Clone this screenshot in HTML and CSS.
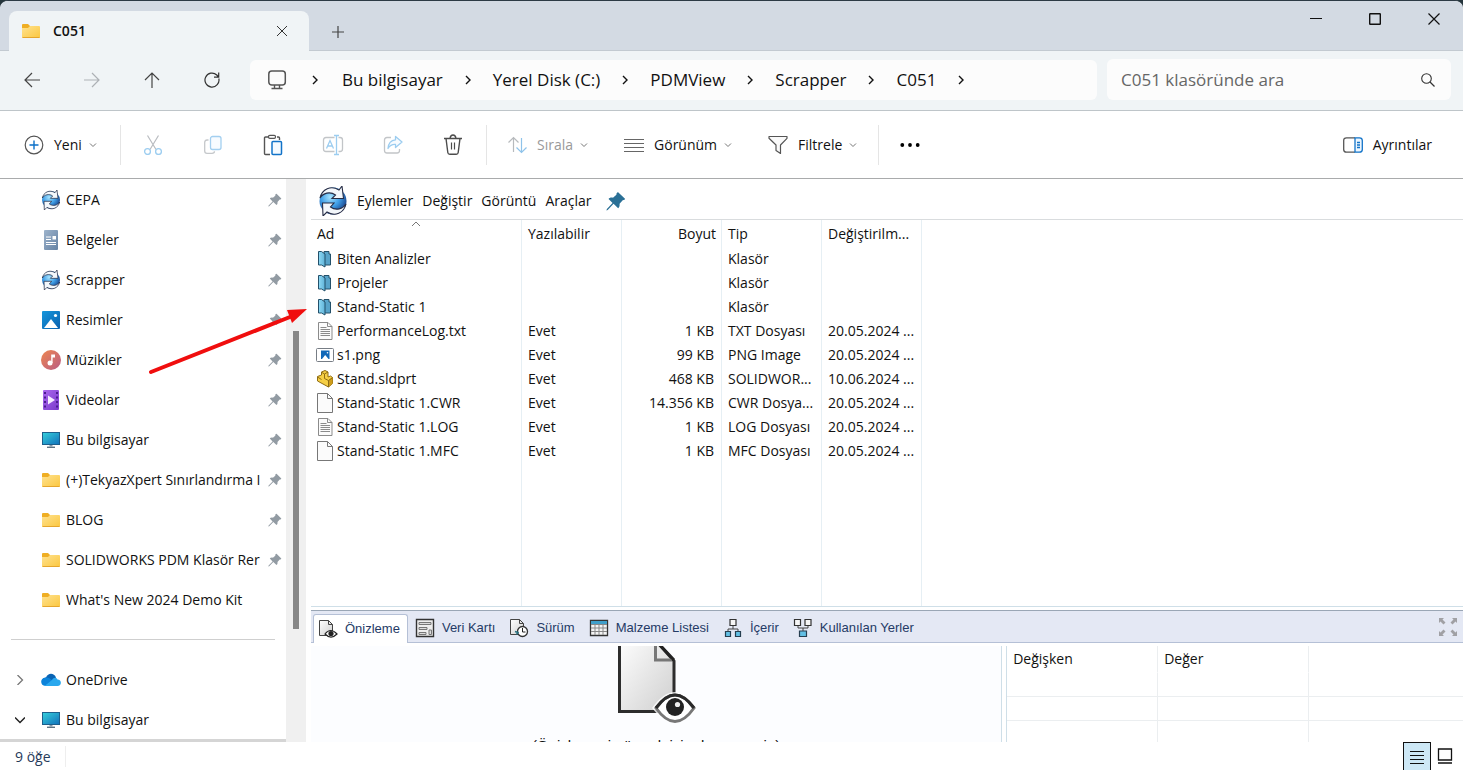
FILE: index.html
```html
<!DOCTYPE html>
<html lang="tr">
<head>
<meta charset="utf-8">
<title>C051</title>
<link rel="stylesheet" href="styles.css">
</head>
<body>
<svg class="sprite" aria-hidden="true">
  <defs>
    <linearGradient id="gFolder" x1="0" y1="0" x2="1" y2="1"><stop offset="0" stop-color="#ffe28f"/><stop offset="1" stop-color="#fbc740"/></linearGradient>
    <linearGradient id="gDoc" x1="0" y1="0" x2="1" y2="1"><stop offset="0" stop-color="#9db3cb"/><stop offset="1" stop-color="#6683a5"/></linearGradient>
    <linearGradient id="gPic" x1="0" y1="0" x2="1" y2="1"><stop offset="0" stop-color="#1596dc"/><stop offset="1" stop-color="#0a60ae"/></linearGradient>
    <linearGradient id="gMusic" x1="0" y1="0" x2="1" y2="1"><stop offset="0" stop-color="#ee8750"/><stop offset="1" stop-color="#b95b84"/></linearGradient>
    <linearGradient id="gVideo" x1="0" y1="0" x2="1" y2="1"><stop offset="0" stop-color="#aa68ee"/><stop offset="1" stop-color="#7a3acb"/></linearGradient>
    <linearGradient id="gScreen" x1="0" y1="0" x2="1" y2="1"><stop offset="0" stop-color="#35d1dc"/><stop offset="1" stop-color="#1270bb"/></linearGradient>
    <linearGradient id="gPaper" x1="0" y1="0" x2="1" y2="1"><stop offset="0" stop-color="#ffffff"/><stop offset="1" stop-color="#cfcfcf"/></linearGradient>
    <linearGradient id="gBlue" x1="0" y1="0" x2="1" y2="0"><stop offset="0" stop-color="#8fdaf5"/><stop offset="1" stop-color="#5fb2d8"/></linearGradient>
    <radialGradient id="gGlobe" cx=".4" cy=".35" r=".7"><stop offset="0" stop-color="#a8e4ff"/><stop offset=".5" stop-color="#3f9ee6"/><stop offset="1" stop-color="#14367e"/></radialGradient>
    <symbol id="folder" viewBox="0 0 20 16"><path d="M1 2a1 1 0 0 1 1-1h5l2 2h9v5H1z" fill="#efae24"/><path d="M1 5h6l2-2h9q1 0 1 1v10q0 1-1 1H2q-1 0-1-1z" fill="url(#gFolder)"/><path d="M1.500 14.500h17" stroke="#e5a52c"/></symbol>
    <symbol id="pdm" viewBox="0 0 30 30"><circle cx="15" cy="15" r="13.500" fill="url(#gGlobe)"/><path d="M2 12C4 3 13-1 21 4l3-4 1.500 12.500H14L17.500 9C12 5 5 7 2 12z" fill="#f3f7fb" stroke="#272d46" stroke-width="1.100"/><path d="M28 18c-2 9-11 13-19 8l-4 4-.5-13H16L12.500 21c5.500 4 12.500 2 15.500-3z" fill="#f3f7fb" stroke="#272d46" stroke-width="1.100"/></symbol>
    <symbol id="doc" viewBox="0 0 20 20"><rect x="3" width="14" height="20" rx="1" fill="url(#gDoc)"/><path d="M5 7h5M5 9.500h5M5 12.500h10M5 14.500h10" stroke="#fff"/><path d="M11.500 6h3.500v3.500h-3.500z" fill="#fff"/></symbol>
    <symbol id="picture" viewBox="0 0 20 20"><rect x="1" y="1" width="18" height="18" rx="1" fill="url(#gPic)"/><path d="M3 18l7-9 7 9z" fill="#fff"/><circle cx="14.500" cy="5.500" r="1.600" fill="#fff"/></symbol>
    <symbol id="music" viewBox="0 0 20 20"><circle cx="10" cy="10" r="10" fill="url(#gMusic)"/><circle cx="9" cy="13" r="2.500" fill="#fff"/><path d="M10.200 13V4.500H14v3h-2.400V13z" fill="#fff"/></symbol>
    <symbol id="video" viewBox="0 0 20 20"><rect x="2" width="16" height="20" rx="1" fill="url(#gVideo)"/><path d="M4 2v18M16 2v18" stroke="#4b1c91" stroke-width="2" stroke-dasharray="2 2.500"/><path d="M7 5.500v9l7-4.500z" fill="#f5ecff"/></symbol>
    <symbol id="monitor" viewBox="0 0 20 20"><rect x="1.500" y="2.500" width="17" height="12" fill="url(#gScreen)" stroke="#1c5f8c"/><path d="M8.500 15h3v1.500h-3z" fill="#8398a9"/><path d="M6 17.300h8" stroke="#5e7281" stroke-width="1.400"/></symbol>
    <symbol id="cloud" viewBox="0 0 20 14"><path d="M5 4.500C7-.5 13-.5 15 4.500l-3 4-8 3C0 10 0 5 5 4.500z" fill="#0a64b4"/><path d="M4.500 4.500c3-.5 5 1 7 3l-7 5.500C-1 13-1.500 5 4.500 4.500z" fill="#0c83da"/><path d="M3.500 13l7.500-6c1.500-3 4.500-3 5.500-.5C21 6.500 21 13 16.500 13z" fill="#2aa8ee"/></symbol>
    <symbol id="pin" viewBox="0 0 14 14"><path d="M8.500.8l4.800 4.600c.2.500-.7 1-1.600 1L9.500 9c.2 1.500-.2 2.700-1 3L5.300 9 1.200 13.300l-.9.300.3-1L4.600 8.400 1.800 5.600c.5-.8 1.600-1.200 3.100-.9l2.400-2C7.200 1.700 7.700.7 8.500.8z"/></symbol>
    <symbol id="chev" viewBox="0 0 8 10"><path d="M2 1l4 4-4 4" fill="none" stroke="currentColor" stroke-width="1.400"/></symbol>
    <symbol id="down" viewBox="0 0 10 10"><path d="M2 3.500l3 3 3-3" fill="none" stroke="currentColor"/></symbol>
    <symbol id="pdmfolder" viewBox="0 0 18 20"><path d="M8 2.500h5V5h1.500v11H8z" fill="#57a3c9" stroke="#23506a"/><path d="M2.500 2.500h3L9 5v13l-3.500-2h-3z" fill="url(#gBlue)" stroke="#23506a"/></symbol>
    <symbol id="blank" viewBox="0 0 18 20"><path d="M1.500.5h10l5 5v14h-15z" fill="#fbfbfb" stroke="#777"/><path d="M11.500.5v5h5" fill="none" stroke="#777"/></symbol>
    <symbol id="textfile" viewBox="0 0 18 20"><path d="M2.500 1.500h9.500l4 4v13H2.500z" fill="#fbfbfb" stroke="#8b8b8b"/><path d="M11.500 1.500v4H16M4.500 6.500h6M4.500 8.500h9.500M4.500 10.500h9.500M4.500 12.500h9.500M4.500 14.500h9.500" fill="none" stroke="#8b8b8b"/></symbol>
    <symbol id="imgfile" viewBox="0 0 18 20"><rect x=".5" y="3.500" width="17" height="13" rx="1" fill="#fff" stroke="#777d85"/><rect x="5" y="5.500" width="8.500" height="8.500" fill="#1168b8"/><path d="M6 14l3.200-4 3.300 4z" fill="#fff"/><circle cx="11.500" cy="7.700" r=".8" fill="#fff"/></symbol>
    <symbol id="part" viewBox="0 0 18 20"><path d="M5.500 3L9 1.500l3 1.500v5l2.500-1 2 1.500v6l-4 3.500-11-6V7.500L5.500 6z" fill="#f6cf45" stroke="#8f6d14"/><path d="M12.500 11l4-2.500v6l-4 3.500z" fill="#cf9d1b"/><path d="M5.500 3.200L8.500 5 12 3M8.500 5v4.500l4 2 4-2.800M12.500 11.500V18M1.500 8l4 2.500" fill="none" stroke="#8f6d14"/></symbol>
    <symbol id="page" viewBox="0 0 20 20"><path d="M1.500 1.500h9l4 4v11h-13z" fill="url(#gPaper)" stroke="#444"/><path d="M10.500 1.500v4h4" fill="none" stroke="#444"/></symbol>
  </defs>
</svg>

<header class="titlebar">
  <div class="tab">
    <svg class="i20" aria-hidden="true"><use href="#folder"/></svg>
    <span class="tab-name">C051</span>
    <button class="bare" aria-label="Sekmeyi kapat"><svg width="12" height="12" viewBox="0 0 12 12"><path d="M1 1l10 10M11 1L1 11" stroke="#333"/></svg></button>
  </div>
  <button class="bare newtab" aria-label="Yeni sekme"><svg width="12" height="12" viewBox="0 0 12 12"><path d="M6 0v12M0 6h12" stroke="#444" stroke-width="1.200"/></svg></button>
  <div class="window-buttons">
    <button class="bare" aria-label="Simge durumuna küçült"><svg width="12" height="12" viewBox="0 0 12 12"><path d="M0 5.500h12" stroke="#111"/></svg></button>
    <button class="bare" aria-label="Ekranı kapla"><svg width="12" height="12" viewBox="0 0 12 12"><rect x=".7" y=".7" width="10.600" height="10.600" rx=".5" fill="none" stroke="#111" stroke-width="1.400"/></svg></button>
    <button class="bare" aria-label="Kapat"><svg width="12" height="12" viewBox="0 0 12 12"><path d="M.5.500l11 11M11.500.5l-11 11" stroke="#111" stroke-width="1.200"/></svg></button>
  </div>
</header>

<div class="navbar">
  <div class="nav-buttons">
    <button class="bare" aria-label="Geri"><svg width="16" height="16" viewBox="0 0 16 16"><path d="M16 8H1M8 1L1 8l7 7" fill="none" stroke="#444" stroke-width="1.200"/></svg></button>
    <button class="bare" aria-label="İleri" disabled><svg width="16" height="16" viewBox="0 0 16 16"><path d="M0 8h15M8 1l7 7-7 7" fill="none" stroke="#adb1b5" stroke-width="1.200"/></svg></button>
    <button class="bare" aria-label="Yukarı"><svg width="16" height="16" viewBox="0 0 16 16"><path d="M8 16V1M1 8l7-7 7 7" fill="none" stroke="#444" stroke-width="1.200"/></svg></button>
    <button class="bare" aria-label="Yenile"><svg width="16" height="16" viewBox="0 0 16 16"><path d="M14.800 6.500A7 7 0 1 1 12.800 3L14.500 5M14.700.5V5.200H10" fill="none" stroke="#333" stroke-width="1.200"/></svg></button>
  </div>
  <nav class="address" aria-label="Adres">
    <svg width="20" height="20" viewBox="0 0 20 20" aria-hidden="true"><rect x="1.800" y="1" width="16.500" height="14" rx="3" fill="none" stroke="#555" stroke-width="1.500"/><path d="M7.500 15v3M12.500 15v3M4.500 18.500h11" stroke="#555" stroke-width="1.400"/></svg>
    <svg class="chev"><use href="#chev"/></svg><a href="#pc">Bu bilgisayar</a>
    <svg class="chev"><use href="#chev"/></svg><a href="#c">Yerel Disk (C:)</a>
    <svg class="chev"><use href="#chev"/></svg><a href="#pdmview">PDMView</a>
    <svg class="chev"><use href="#chev"/></svg><a href="#scrapper">Scrapper</a>
    <svg class="chev"><use href="#chev"/></svg><a href="#c051">C051</a>
    <svg class="chev"><use href="#chev"/></svg>
  </nav>
  <div class="search">
    <input type="search" placeholder="C051 klasöründe ara" aria-label="C051 klasöründe ara">
    <svg width="14" height="14" viewBox="0 0 14 14" aria-hidden="true"><circle cx="5.500" cy="5.500" r="4.800" fill="none" stroke="#333" stroke-width="1.100"/><path d="M9 9l4.500 4.500" stroke="#333" stroke-width="1.200"/></svg>
  </div>
</div>

<div class="toolbar">
  <button class="tool new"><svg width="20" height="20" viewBox="0 0 20 20"><circle cx="10" cy="10" r="8.800" fill="none" stroke="#555" stroke-width="1.200"/><path d="M10 5.500v9M5.500 10h9" stroke="#0a6fc8" stroke-width="1.400"/></svg>Yeni<svg class="down"><use href="#down"/></svg></button>
  <div class="icon-group">
    <button class="bare" aria-label="Kes" disabled><svg width="20" height="20" viewBox="0 0 20 20"><path d="M4.500.5l8.500 14M15.500.5L7 14.500" stroke="#b9bcc0" stroke-width="1.200"/><circle cx="4.500" cy="16.500" r="2.900" fill="none" stroke="#9ccdf0" stroke-width="1.300"/><circle cx="15.500" cy="16.500" r="2.900" fill="none" stroke="#9ccdf0" stroke-width="1.300"/></svg></button>
    <button class="bare" aria-label="Kopyala" disabled><svg width="20" height="20" viewBox="0 0 20 20"><path d="M5.500 5H4Q1.700 5 1.700 7.500V16q0 2.300 2.300 2.300h5q2.500 0 2.500-2" fill="none" stroke="#c5c8cb" stroke-width="1.300"/><rect x="7.500" y="1.500" width="10.500" height="13" rx="2" fill="#f7fbff" stroke="#a3cff0" stroke-width="1.300"/></svg></button>
    <button class="bare" aria-label="Yapıştır"><svg width="20" height="22" viewBox="0 0 20 22"><path d="M6 3H2.500q-1 0-1 1v15.500q0 1 1 1H7M14 3h1.500q1 0 1 1v2" fill="none" stroke="#555" stroke-width="1.400"/><rect x="5.500" y="1.300" width="7" height="3" rx="1.300" fill="#fff" stroke="#555" stroke-width="1.200"/><rect x="9" y="7.500" width="9.500" height="13" rx="1" fill="#f4faff" stroke="#1273c8" stroke-width="1.500"/></svg></button>
    <button class="bare" aria-label="Yeniden adlandır" disabled><svg width="22" height="22" viewBox="0 0 22 22"><path d="M12.500 3.500H4q-2.500 0-2.500 2.500v9q0 2.500 2.500 2.500h8.500M16.500 3.500H18q2.500 0 2.500 2.500v9q0 2.500-2.500 2.500h-1.500" fill="none" stroke="#c2c5c8" stroke-width="1.300"/><path d="M4.500 14.500L8 6.500l3.500 8M5.700 12h4.600M14.500 1.500v19M12 1.500h5M12 20.500h5" fill="none" stroke="#9ccdf0" stroke-width="1.300"/></svg></button>
    <button class="bare" aria-label="Paylaş" disabled><svg width="20" height="20" viewBox="0 0 20 20"><path d="M8 2.500H4Q1.500 2.500 1.500 5v10.500Q1.500 18 4 18h10q2.500 0 2.500-2.500V14" fill="none" stroke="#c2c5c8" stroke-width="1.300"/><path d="M12.500 1.500L19 7l-6.500 5.500V9.500Q8 9 5 13.500 5.500 5.500 12.500 4.800z" fill="#f7fbff" stroke="#9ccdf0" stroke-width="1.300" stroke-linejoin="round"/></svg></button>
    <button class="bare" aria-label="Sil"><svg width="20" height="22" viewBox="0 0 20 22"><path d="M1 4.500h18M7 4.500Q7.500 1 10 1t3 3.500M3 4.500l1.800 14q.2 1.800 2 1.800h6.400q1.800 0 2-1.800L17 4.500" fill="none" stroke="#4c4c4c" stroke-width="1.400"/><path d="M8.500 8.500v7M11.500 8.500v7" stroke="#4c4c4c" stroke-width="1.200"/></svg></button>
  </div>
  <div class="label-group">
    <button class="tool" disabled><svg width="20" height="20" viewBox="0 0 20 20"><path d="M6.500 17V2.500M1.500 7.500l5-5 5 5" fill="none" stroke="#b7babd" stroke-width="1.200"/><path d="M14.500 3v14.500M9.500 12.500l5 5 5-5" fill="none" stroke="#8fc3ea" stroke-width="1.200"/></svg>Sırala<svg class="down"><use href="#down"/></svg></button>
    <button class="tool"><svg width="20" height="20" viewBox="0 0 20 20"><path d="M0 4.500h20M0 8.500h20M0 12.500h20M0 16.500h20" stroke="#666" stroke-width="1.200"/></svg>Görünüm<svg class="down"><use href="#down"/></svg></button>
    <button class="tool"><svg width="20" height="20" viewBox="0 0 20 20"><path d="M1 1.500h18v1.800L12.500 10v8.500L8 15.500V10L1 3.300z" fill="#fafafa" stroke="#555" stroke-width="1.200" stroke-linejoin="round"/></svg>Filtrele<svg class="down"><use href="#down"/></svg></button>
  </div>
  <button class="bare more" aria-label="Daha fazla"><svg width="20" height="6" viewBox="0 0 20 6"><circle cx="2.300" cy="3" r="1.900"/><circle cx="10" cy="3" r="1.900"/><circle cx="17.700" cy="3" r="1.900"/></svg></button>
  <button class="tool details"><svg width="20" height="20" viewBox="0 0 20 20"><path d="M12 2.800H3.500Q.7 2.800.7 5.500v9q0 2.700 2.800 2.700H12" fill="none" stroke="#555" stroke-width="1.300"/><path d="M12 2.800h4.500q2.800 0 2.800 2.700v9q0 2.700-2.800 2.700H12zM14 7.500h3M14 10h3M14 12.500h3" fill="#edf6fe" stroke="#1273c8" stroke-width="1.300"/></svg>Ayrıntılar</button>
</div>

<div class="main">
  <aside class="sidebar">
    <nav class="tree" aria-label="Gezinti bölmesi">
      <a href="#1" class="item"><svg class="i20"><use href="#pdm"/></svg><span>CEPA</span><svg class="pin"><use href="#pin"/></svg></a>
      <a href="#2" class="item"><svg class="i20"><use href="#doc"/></svg><span>Belgeler</span><svg class="pin"><use href="#pin"/></svg></a>
      <a href="#3" class="item"><svg class="i20"><use href="#pdm"/></svg><span>Scrapper</span><svg class="pin"><use href="#pin"/></svg></a>
      <a href="#4" class="item"><svg class="i20"><use href="#picture"/></svg><span>Resimler</span><svg class="pin"><use href="#pin"/></svg></a>
      <a href="#5" class="item"><svg class="i20"><use href="#music"/></svg><span>Müzikler</span><svg class="pin"><use href="#pin"/></svg></a>
      <a href="#6" class="item"><svg class="i20"><use href="#video"/></svg><span>Videolar</span><svg class="pin"><use href="#pin"/></svg></a>
      <a href="#7" class="item"><svg class="i20"><use href="#monitor"/></svg><span>Bu bilgisayar</span><svg class="pin"><use href="#pin"/></svg></a>
      <a href="#8" class="item"><svg class="i20"><use href="#folder"/></svg><span>(+)TekyazXpert Sınırlandırma I</span><svg class="pin"><use href="#pin"/></svg></a>
      <a href="#9" class="item"><svg class="i20"><use href="#folder"/></svg><span>BLOG</span><svg class="pin"><use href="#pin"/></svg></a>
      <a href="#10" class="item"><svg class="i20"><use href="#folder"/></svg><span>SOLIDWORKS PDM Klasör Rer</span><svg class="pin"><use href="#pin"/></svg></a>
      <a href="#11" class="item"><svg class="i20"><use href="#folder"/></svg><span>What's New 2024 Demo Kit</span></a>
      <hr>
      <a href="#12" class="item branch"><svg class="twist" viewBox="0 0 10 10"><path d="M2.500 0l5 5-5 5" fill="none" stroke="#777" stroke-width="1.300"/></svg><svg class="i20"><use href="#cloud"/></svg><span>OneDrive</span></a>
      <a href="#13" class="item branch"><svg class="twist" viewBox="0 0 10 10"><path d="M0 2.500l5 5 5-5" fill="none" stroke="#222" stroke-width="1.500"/></svg><svg class="i20"><use href="#monitor"/></svg><span>Bu bilgisayar</span></a>
    </nav>
    <div class="scrollbar"><div class="thumb"></div></div>
  </aside>

  <main class="content">
    <div class="menubar">
      <svg class="logo"><use href="#pdm"/></svg>
      <button class="menu">Eylemler</button><button class="menu">Değiştir</button><button class="menu">Görüntü</button><button class="menu">Araçlar</button>
      <button class="bare" aria-label="Sabitle"><svg class="menu-pin"><use href="#pin"/></svg></button>
    </div>
    <div class="list">
      <table class="files">
        <colgroup><col class="name"><col><col><col><col><col class="rest"></colgroup>
        <thead><tr><th>Ad<svg class="sort" viewBox="0 0 10 6"><path d="M1 5l4-4 4 4" fill="none" stroke="#777"/></svg></th><th>Yazılabilir</th><th class="num">Boyut</th><th>Tip</th><th>Değiştirilm...</th><td></td></tr></thead>
        <tbody>
          <tr><td><svg><use href="#pdmfolder"/></svg>Biten Analizler</td><td></td><td></td><td>Klasör</td><td></td><td></td></tr>
          <tr><td><svg><use href="#pdmfolder"/></svg>Projeler</td><td></td><td></td><td>Klasör</td><td></td><td></td></tr>
          <tr><td><svg><use href="#pdmfolder"/></svg>Stand-Static 1</td><td></td><td></td><td>Klasör</td><td></td><td></td></tr>
          <tr><td><svg><use href="#textfile"/></svg>PerformanceLog.txt</td><td>Evet</td><td class="num">1 KB</td><td>TXT Dosyası</td><td>20.05.2024 ...</td><td></td></tr>
          <tr><td><svg><use href="#imgfile"/></svg>s1.png</td><td>Evet</td><td class="num">99 KB</td><td>PNG Image</td><td>20.05.2024 ...</td><td></td></tr>
          <tr><td><svg><use href="#part"/></svg>Stand.sldprt</td><td>Evet</td><td class="num">468 KB</td><td>SOLIDWOR...</td><td>10.06.2024 ...</td><td></td></tr>
          <tr><td><svg><use href="#blank"/></svg>Stand-Static 1.CWR</td><td>Evet</td><td class="num">14.356 KB</td><td>CWR Dosya...</td><td>20.05.2024 ...</td><td></td></tr>
          <tr><td><svg><use href="#textfile"/></svg>Stand-Static 1.LOG</td><td>Evet</td><td class="num">1 KB</td><td>LOG Dosyası</td><td>20.05.2024 ...</td><td></td></tr>
          <tr><td><svg><use href="#blank"/></svg>Stand-Static 1.MFC</td><td>Evet</td><td class="num">1 KB</td><td>MFC Dosyası</td><td>20.05.2024 ...</td><td></td></tr>
          <tr class="filler"><td></td><td></td><td></td><td></td><td></td><td></td></tr>
        </tbody>
      </table>
    </div>
    <div class="tabs">
      <button class="ptab active"><svg viewBox="0 0 20 20"><use href="#page"/><path d="M7 15q5.500-7 12 0-6 6-12 0z" fill="#fff" stroke="#222" stroke-width="1.200"/><circle cx="13" cy="14.500" r="2.600" fill="#222"/></svg>Önizleme</button>
      <button class="ptab"><svg viewBox="0 0 20 20"><path d="M1.500 1.500h17v17h-17z" fill="#eee" stroke="#333" stroke-width="1.400"/><path d="M4 4.500h12v2H4zM4 9.500h8v2H4zM4 14.500h7v2H4zM14 12h2.500v4.500H14z" fill="#ddd" stroke="#777"/></svg>Veri Kartı</button>
      <button class="ptab"><svg viewBox="0 0 20 20"><use href="#page"/><circle cx="13.500" cy="13.500" r="5" fill="#fff" stroke="#333" stroke-width="1.300"/><path d="M13.500 10v4h3" fill="none" stroke="#222"/><path d="M6 13.500l3 1-1.500 2" fill="none" stroke="#28707f" stroke-width="1.500"/></svg>Sürüm</button>
      <button class="ptab"><svg viewBox="0 0 20 20"><path d="M1.500 2.500h17v15h-17z" fill="#f4f4f4" stroke="#333" stroke-width="1.300"/><path d="M2 3h16v3H2z" fill="#409fca"/><path d="M2 6.500h16M2 10h16M2 13.500h16M6 7v10M10 7v10M14 7v10" stroke="#888"/></svg>Malzeme Listesi</button>
      <button class="ptab"><svg viewBox="0 0 20 20"><path d="M10 7v4M5 14v-3h10v3" fill="none" stroke="#444"/><path d="M7 1.500h6v6H7z" fill="#f6f6f6" stroke="#333" stroke-width="1.200"/><path d="M2.500 13.500h5v5h-5zM12.500 13.500h5v5h-5z" fill="#62bfe4" stroke="#263f50" stroke-width="1.200"/></svg>İçerir</button>
      <button class="ptab"><svg viewBox="0 0 20 20"><path d="M5 7v3h10V7M10 10v3" fill="none" stroke="#444"/><path d="M1.500 1.500h6v6h-6zM12 1.500h6v6h-6z" fill="#f6f6f6" stroke="#333" stroke-width="1.200"/><path d="M6.500 13h7v5.500h-7z" fill="#62bfe4" stroke="#263f50" stroke-width="1.200"/></svg>Kullanılan Yerler</button>
      <button class="bare expand" aria-label="Genişlet"><svg width="20" height="20" viewBox="0 0 20 20" fill="#a0a0a4"><path d="M1 6V1h5L4.500 2.500l3 3-2 2-3-3zM19 6V1h-5l1.500 1.500-3 3 2 2 3-3zM1 14v5h5l-1.500-1.500 3-3-2-2-3 3zM19 14v5h-5l1.500-1.500-3-3 2-2 3 3z"/></svg></button>
    </div>
    <div class="lower">
      <section class="preview">
        <svg width="82" height="80" viewBox="0 0 82 80" aria-hidden="true"><path d="M4.500-10v75.500H59V15L42-4z" fill="url(#gPaper)" stroke="#2d2d2d" stroke-width="3"/><path d="M40.500-5v19H57" fill="none" stroke="#777" stroke-width="3"/><path d="M43-3l16 17" stroke="#222" stroke-width="3"/><path d="M37 62q23-32 46 0-23 30-46 0z" fill="#fff" opacity=".8"/><path d="M41 62q19-26 38 0-19 27-38 0z" fill="#fff" stroke="#777" stroke-width="3"/><path d="M41 62q19-26 38 0" fill="none" stroke="#2a2a2a" stroke-width="3"/><circle cx="60" cy="61" r="9" fill="#222"/><circle cx="62.500" cy="58.500" r="2.600" fill="#eee"/></svg>
        <p>(Önizlemeyi görmek için dosya seçin)</p>
      </section>
      <table class="vars">
        <colgroup><col class="v"><col class="v"><col></colgroup>
        <thead><tr><th>Değişken</th><th>Değer</th><td></td></tr></thead>
        <tbody>
          <tr><td></td><td></td><td></td></tr>
          <tr><td></td><td></td><td></td></tr>
          <tr class="last"><td></td><td></td><td></td></tr>
        </tbody>
      </table>
    </div>
  </main>
  <svg class="arrow" width="160" height="70" viewBox="0 0 160 70" aria-hidden="true"><path d="M3 66L142 11" stroke="#f00e0e" stroke-width="4" stroke-linecap="round"/><path d="M159 3l-20 1 5 13z" fill="#f00e0e"/></svg>
</div>

<footer class="status">
  <span>9 öğe</span>
  <div class="views">
    <button class="view on" aria-label="Ayrıntılar görünümü"><svg width="16" height="16" viewBox="0 0 16 16"><path d="M1 2.500h14M1 6.500h14M1 10.500h14M1 14.500h14" stroke="#111"/></svg></button>
    <button class="view" aria-label="Büyük simgeler"><svg width="16" height="16" viewBox="0 0 16 16"><path d="M1.500 1h13v11h-13zM1 15h14" fill="none" stroke="#111" stroke-width="1.300"/></svg></button>
  </div>
</footer>
</body>
</html>
```
FILE: styles.css
```css
* { box-sizing: border-box; }
html { background: #25353c; }
body {
  margin: 0;
  height: 100vh;
  display: flex;
  flex-direction: column;
  overflow: hidden;
  background: #fff;
  color: #111;
  font: 14px/20px "Open Sans", sans-serif;
  border-top: 1px solid #2c3a45;
  border-radius: 8px 8px 0 0;
}
button { font: inherit; color: inherit; border: 0; background: none; padding: 0; }
a { color: inherit; text-decoration: none; }
svg { flex: none; display: block; }
.sprite { position: absolute; width: 0; height: 0; }
.bare { display: flex; align-items: center; justify-content: center; }
.i20 { width: 20px; height: 20px; }
.chev { width: 8px; height: 10px; }
.down { width: 10px; height: 10px; color: #777; }

.titlebar { display: flex; height: 50px; background: #d3dae3; border-bottom: 1px solid #c3cad1; flex: none; }
.tab { display: flex; align-items: center; gap: 12px; width: 300px; margin: 10px 0 -1px 9px; padding: 0 19px 0 12px; background: #f0f4f6; border-radius: 8px 8px 0 0; }
.tab-name { flex: 1; font-weight: 600; }
.tab .bare { width: 16px; height: 20px; }
.newtab { width: 58px; padding-top: 12px; }
.window-buttons { display: flex; margin-left: auto; height: 36px; }
.window-buttons .bare { width: 59px; }

.navbar { display: flex; align-items: center; gap: 8px; height: 60px; padding: 0 12px 2px 2px; background: #f0f4f6; border-bottom: 1px solid #bec5c9; flex: none; }
.nav-buttons { display: flex; }
.nav-buttons .bare { width: 60px; height: 40px; }
.address { flex: 1; display: flex; align-items: center; gap: 21px; height: 40px; margin-right: 2px; padding: 0 17px; background: #fcfcfc; border-radius: 6px; font-size: 17px; white-space: nowrap; overflow: hidden; }
.address > svg:first-child { margin-right: 3px; }
.address a:first-of-type { margin-left: 2px; }
.search { display: flex; align-items: center; width: 344px; height: 41px; padding: 0 16px 0 14px; background: #fcfcfc; border-radius: 6px; }
.search input { flex: 1; min-width: 0; border: 0; padding: 0; background: none; outline: 0; font: 17px/24px "Open Sans", sans-serif; }
.search input::placeholder { color: #666; opacity: 1; }

.toolbar { display: flex; align-items: center; height: 68px; padding: 1px 31px 0 24px; border-bottom: 1px solid #a9abac; flex: none; }
.tool { display: flex; align-items: center; gap: 10px; white-space: nowrap; }
.tool .down { margin-left: -4px; }
.tool:disabled { color: #999; }
.new { width: 96px; }
.icon-group { display: flex; height: 40px; padding: 0 3px 0 2px; border: solid #e5e5e5; border-width: 0 1px; }
.icon-group .bare { width: 60px; }
.label-group { display: flex; gap: 35px; height: 40px; padding: 0 20px; border-right: 1px solid #e5e5e5; }
.more { width: 62px; }
.details { margin-left: auto; }

.main { position: relative; flex: 1; min-height: 0; display: flex; }
.sidebar { display: flex; width: 311px; flex: none; }
.tree { flex: 1; min-width: 0; overflow: hidden; padding-top: 1px; border-bottom: 3px solid #d5d5d5; }
.item { display: flex; align-items: center; height: 40px; padding: 0 4px 0 41px; }
.item span { flex: 1; min-width: 0; padding-left: 5px; overflow: hidden; white-space: nowrap; }
.branch { padding-left: 15px; }
.twist { width: 10px; height: 10px; margin-right: 16px; }
.pin { width: 14px; height: 14px; margin-left: 2px; fill: #929ba3; }
.tree hr { height: 1px; margin: 19px 11px 20px; border: 0; background: #cfcfcf; }
.scrollbar { width: 20px; margin-right: 5px; padding: 152px 7px 113px; background: #f0f0f0; display: flex; }
.thumb { flex: 1; background: #878787; }

.content { flex: 1; min-width: 0; display: flex; flex-direction: column; }
.menubar { display: flex; align-items: center; gap: 9px; height: 41px; padding: 4px 7px 0; border-bottom: 1px solid #d9dcde; flex: none; }
.logo { width: 30px; height: 30px; }
.menu-pin { width: 20px; height: 20px; margin-left: 5px; fill: #2a7096; }
.list { flex: 1; min-height: 0; border-bottom: 1px solid #cfdfe8; }
table { border-collapse: separate; border-spacing: 0; table-layout: fixed; width: 100%; }
th { text-align: left; font-weight: 400; }
.files { height: 100%; }
.files col { width: 100px; }
.files .name { width: 211px; }
.files .rest { width: auto; }
.files tr { height: 24px; }
.files thead tr { height: 27px; }
.files th, .files td { padding: 0 0 0 6px; border-right: 1px solid #e6eff4; overflow: hidden; white-space: nowrap; line-height: 20px; }
.files td:last-child { border: 0; }
.files .num { text-align: right; padding: 0 7px 0 0; }
.files th.num { padding-right: 5px; }
.files td svg { display: inline-block; width: 18px; height: 20px; margin: 0 3px 0 -1px; vertical-align: top; }
.files th:first-child { position: relative; }
.sort { position: absolute; left: calc(50% - 5px); top: 1px; width: 10px; height: 6px; }
.files .filler { height: auto; }

.tabs { display: flex; align-items: flex-end; height: 33px; margin-top: 3px; border-top: 1px solid #9aa6b5; border-bottom: 1px solid #b5c0d6; background: #e4e8f4; color: #253b66; font: 13px/18px "Liberation Sans", sans-serif; flex: none; }
.ptab { display: flex; align-items: center; gap: 7px; height: 28px; padding: 0 7px; white-space: nowrap; }
.ptab svg { width: 20px; height: 20px; }
.ptab.active { height: 29px; margin: 0 0 -1px 2px; padding: 0 7px 0 4px; background: #fff; border: 1px solid #b5c0d6; border-bottom: 0; border-radius: 3px 3px 0 0; }
.expand { margin-left: auto; width: 30px; height: 30px; }
.lower { display: flex; height: 99px; padding-top: 3px; overflow: hidden; background: #fff; flex: none; }
.preview { width: 60%; overflow: hidden; background: #fcfdff; border-right: 1px solid #cfdfe8; display: flex; flex-direction: column; align-items: center; }
.preview p { margin: 12px 0 0; font: 15px/16px "Liberation Sans", sans-serif; white-space: nowrap; }
.vars { flex: 1; margin-left: 4px; border-left: 1px solid #cfdfe8; }
.vars .v { width: 151px; }
.vars th, .vars td { height: 24px; padding: 0 6px; border: solid #ebeef0; border-width: 0 1px 1px 0; }
.vars th { height: 27px; }
.vars thead th, .vars thead td { border-bottom-color: #fff; }
.vars td:last-child { border-right: 0; }
.vars .last td { border-bottom: 0; }
.arrow { position: absolute; left: 148px; top: 127px; }

.status { display: flex; height: 28px; align-items: center; color: #263a59; padding: 0 4px 0 15px; flex: none; }
.status span { padding: 1px 14px 0 0; border-right: 1px solid #eee; }
.views { display: flex; align-self: stretch; margin-left: auto; }
.view { width: 28px; display: flex; align-items: center; justify-content: center; }
.view.on { background: #cde8f6; border: 1px solid #111; border-bottom: 0; }
```
